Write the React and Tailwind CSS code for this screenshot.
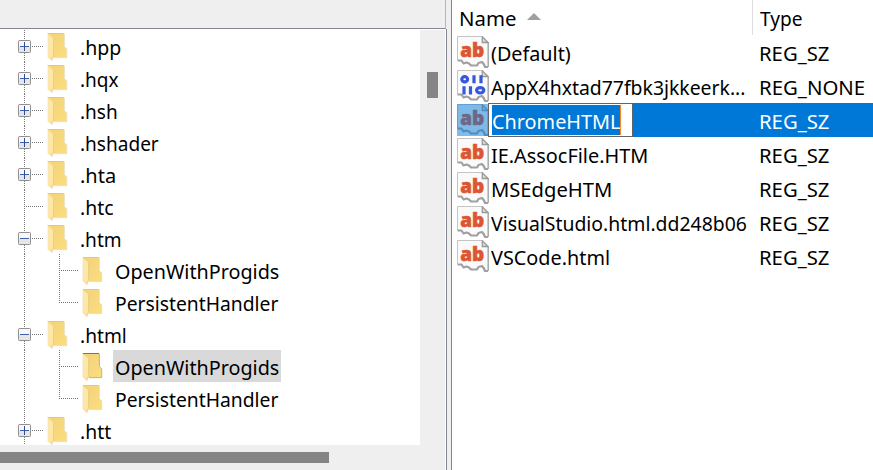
import { useLayoutEffect, useRef, useState } from 'react';

// Text squeezed horizontally to a fixed advance width.
function Label({ w, className = '', children }) {
  const ref = useRef(null);
  const [scale, setScale] = useState(1);
  useLayoutEffect(() => {
    setScale(w / ref.current.offsetWidth);
  }, [w]);
  return (
    <span className={`block ${className}`} style={{ width: w }}>
      <span
        ref={ref}
        className="inline-block origin-left whitespace-nowrap"
        style={{ transform: `scaleX(${scale})` }}
      >
        {children}
      </span>
    </span>
  );
}

function Folder({ selected }) {
  return (
    <svg className="block h-8 w-[22px] shrink-0" viewBox="0 0 22 32">
      <defs>
        <linearGradient id="back" x1="0" y1="0" x2="1" y2="1">
          <stop offset="0" stopColor="#f3d27b" />
          <stop offset="1" stopColor="#fbdd7e" />
        </linearGradient>
        <linearGradient id="flap" x1="0" y1="0" x2="1" y2="1">
          <stop offset="0" stopColor="#ffebae" />
          <stop offset="1" stopColor="#fde3a0" />
        </linearGradient>
      </defs>
      <path d="M1 3.500H17V16.500L19.500 19V27.500H6L1 26Z" fill="url(#back)" />
      <path d="M0.800 3.500H17.200" stroke={selected ? '#77736a' : '#d0c8b8'} strokeWidth="1" />
      <path d="M17.400 4V16.500L19.700 19V27.600H7" fill="none" stroke={selected ? '#b5aa8d' : '#e9dcb8'} strokeWidth="0.9" />
      <path d="M1 4L6.500 8.500V26.500L5 27.500V30.500L1 27.500Z" fill="url(#flap)" stroke="#efdba6" strokeWidth="0.6" />
      <path d="M6.600 8.500V26.500L5.200 27.500V30.500" fill="none" stroke="#e3c46f" strokeWidth="0.6" />
    </svg>
  );
}

function Expander({ open }) {
  return (
    <svg className="block size-[13px] shrink-0" viewBox="0 0 13 13">
      <rect x="0.5" y="0.5" width="12" height="12" rx="0.8" fill="#f8f8f8" stroke="#919191" />
      <rect x="1" y="7" width="11" height="5" fill="#e6e6e6" />
      <path d="M2 6.500H11" stroke="#3f5fa8" />
      {!open && <path d="M6.500 2V11" stroke="#2f4a9a" />}
    </svg>
  );
}

const hDots = 'h-px bg-[repeating-linear-gradient(90deg,#777_0_1px,transparent_1px_2px)]';
const vDots = 'w-px bg-[repeating-linear-gradient(180deg,#777_0_1px,transparent_1px_2px)]';

function Root({ name, w, open, leaf }) {
  return (
    <div className="flex h-8 items-stretch">
      {leaf ? (
        <>
          <div className={`ml-6 h-8 ${vDots}`} />
          <div className={`ml-px mt-4 w-[17px] ${hDots}`} />
        </>
      ) : (
        <>
          <div className="flex w-[31px] shrink-0 flex-col items-start pl-[18px]">
            <div className={`ml-1.5 h-[10px] ${vDots}`} />
            <Expander open={open} />
            <div className={`ml-1.5 h-[9px] ${vDots}`} />
          </div>
          <div className={`ml-px mt-4 w-[11px] ${hDots}`} />
        </>
      )}
      <div className="ml-1">
        <Folder />
      </div>
      <Label w={w} className="ml-[11px] mt-[2px] leading-[32px]">{name}</Label>
    </div>
  );
}

function Child({ name, w, last, selected }) {
  return (
    <div className="flex h-8 items-stretch">
      <div className="w-[59px] shrink-0 pl-6">
        <div className={`h-8 ${vDots}`} />
      </div>
      <div className={`${last ? 'h-[17px]' : 'h-8'} ${vDots}`} />
      <div className={`mt-4 ml-px w-[17px] ${hDots}`} />
      <div className="ml-1">
        <Folder selected={selected} />
      </div>
      <div className={`ml-[9px] h-8 w-[168px] pl-[1.500px] ${selected ? 'bg-[#d9d9d9]' : ''}`}>
        <Label w={w} className="pt-[2px] leading-[32px]">{name}</Label>
      </div>
    </div>
  );
}

function ValueIcon({ binary, selected }) {
  const outline = 'M0.500 24.500H4.500L6.500 27.500L9.500 26.500L12 27.500L14 29.500H20L21.500 27L25 26L27 28.500L28 31H31';
  return (
    <svg className="block size-8 shrink-0" viewBox="0 0 32 32">
      <path d={`M0.500 0.500V24.500${outline.replace('M0.500 24.500', '')}V7L25.500 0.500Z`} fill="#fafafa" />
      <path d="M0.500 24V0.500H25.500" fill="none" stroke="#c4c4c4" />
      <path d="M31.200 6.500V31" fill="none" stroke="#a8a8a8" strokeWidth="1.500" />
      <path d="M25.300 0.800V6.500H31Z" fill="#e0e0e0" stroke="#999" strokeWidth="1.300" />
      <path d={outline} fill="none" stroke="#a0a0a0" strokeWidth="2.200" strokeLinejoin="round" />
      {binary ? (
        <g fill="none" stroke="#3558dd" strokeWidth="3.200">
          <ellipse cx="7.700" cy="9.300" rx="2.900" ry="2.600" />
          <path d="M17 5.200V13.200M24 5.200V13.200M7 16.200V24.400M13.500 16.200V24.400" />
          <ellipse cx="23.200" cy="20.300" rx="3.600" ry="2.700" />
        </g>
      ) : (
        <text
          x="3.200"
          y="20.600"
          textLength="24"
          lengthAdjust="spacingAndGlyphs"
          fontFamily="Open Sans, Noto Sans, sans-serif"
          fontSize="20"
          fontWeight="800"
          fill="#dc5635"
          stroke="#dc5635"
          strokeWidth="0.6"
        >
          ab
        </text>
      )}
      {selected && <rect width="32" height="32" fill="#0078d7" fillOpacity="0.5" />}
    </svg>
  );
}

const values = [
  { name: '(Default)', w: 80, type: 'REG_SZ', tw: 70 },
  { name: 'AppX4hxtad77fbk3jkkeerk...', w: 255, type: 'REG_NONE', tw: 106, binary: true },
  { name: 'ChromeHTML', w: 129, type: 'REG_SZ', tw: 70, selected: true },
  { name: 'IE.AssocFile.HTM', w: 157, type: 'REG_SZ', tw: 70 },
  { name: 'MSEdgeHTM', w: 121, type: 'REG_SZ', tw: 70 },
  { name: 'VisualStudio.html.dd248b06', w: 256, type: 'REG_SZ', tw: 70 },
  { name: 'VSCode.html', w: 119, type: 'REG_SZ', tw: 70 },
];

function ValueRow({ name, w, type, tw, binary, selected }) {
  return (
    <div className="flex h-[34px] pl-[5px]">
      <div className="pt-px">
        <ValueIcon binary={binary} selected={selected} />
      </div>
      <div className={`flex flex-1 ${selected ? 'bg-[#0078d7] text-white' : ''}`}>
        {selected ? (
          <div className="-ml-px flex h-[34px] w-[145px] border border-[#646464] bg-white py-px pl-[3px]">
            <div className="h-[30px] w-[128px] bg-[#0078d7]">
              <Label w={w} className="pt-px leading-[32px]">{name}</Label>
            </div>
            <div className="h-[30px] w-px bg-[#ff8728]" />
          </div>
        ) : (
          <div className="w-[144px] pl-[2px]">
            <Label w={w} className="pt-[2px] leading-[34px]">{name}</Label>
          </div>
        )}
        <div className="pl-[126px]">
          <Label w={tw} className="pt-[2px] leading-[34px]">{type}</Label>
        </div>
      </div>
    </div>
  );
}

export default function App() {
  return (
    <div className="flex h-[470px] w-[873px] overflow-hidden bg-white font-['Noto_Sans','Open_Sans',sans-serif] text-[20px] text-black">
      <div className="flex w-[446px] shrink-0 flex-col bg-[#efefef]">
        <div className="h-[29px] shrink-0 border-r border-b border-r-[#b5b5b5] border-b-[#828790]" />
        <div className="flex h-[416px] shrink-0">
          <div className="h-[416px] w-[420px] shrink-0 overflow-hidden bg-white pt-px">
            <Root name=".hpp" w={41} />
            <Root name=".hqx" w={39} />
            <Root name=".hsh" w={38} />
            <Root name=".hshader" w={79} />
            <Root name=".hta" w={36} />
            <Root name=".htc" w={34} leaf />
            <Root name=".htm" w={42} open />
            <Child name="OpenWithProgids" w={164} />
            <Child name="PersistentHandler" w={163} last />
            <Root name=".html" w={47} open />
            <Child name="OpenWithProgids" w={164} selected />
            <Child name="PersistentHandler" w={163} last />
            <Root name=".htt" w={31} />
          </div>
          <div className="flex-1 border-t border-r border-white pt-[42px] pl-[7px]">
            <div className="h-[26px] w-[11px] bg-[#858585]" />
          </div>
        </div>
        <div className="flex-1 border-r border-white pt-[7px]">
          <div className="h-[11px] w-[329px] bg-[#858585]" />
        </div>
      </div>
      <div className="flex w-[6px] shrink-0 flex-col border-r border-[#828790] bg-[#efefef]">
        <div className="h-[29px] shrink-0" />
        <div className="w-px flex-1 bg-[#828790]" />
      </div>
      <div className="flex flex-1 flex-col bg-white">
        <div className="flex h-[35px] shrink-0">
          <div className="flex h-[35px] w-[301px] border-r border-[#dedede] pl-[7px]">
            <Label w={57} className="pt-px leading-[36px]">Name</Label>
            <svg className="mt-[13px] ml-[11px] h-[7px] w-[14px]" viewBox="0 0 14 7">
              <path d="M0 7L7 0L14 7Z" fill="#a0a0a0" />
            </svg>
          </div>
          <Label w={43} className="ml-[7px] pt-px leading-[36px]">Type</Label>
        </div>
        {values.map((v) => (
          <ValueRow key={v.name} {...v} />
        ))}
      </div>
    </div>
  );
}
